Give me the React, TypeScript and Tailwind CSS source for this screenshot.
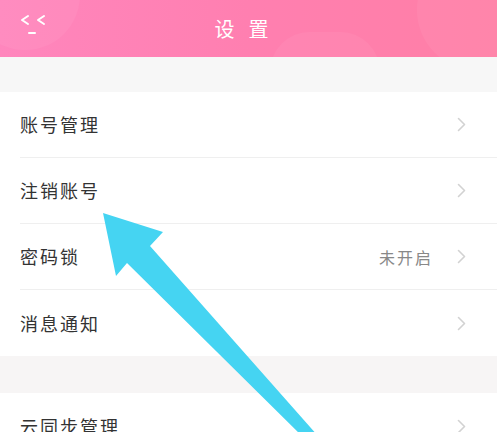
const font = { fontFamily: '"Noto Sans CJK SC", "Noto Sans", sans-serif' }

const Chevron = () => (
  <svg width="9" height="15" viewBox="0 0 9 15" fill="none" stroke="#d2d2d2" strokeWidth="1.6" strokeLinecap="round" strokeLinejoin="round">
    <path d="M1.5 1.5 L7.5 7.5 L1.5 13.5" />
  </svg>
)

const Row = ({ label, value, last }: { label: string; value?: string; last?: boolean }) => (
  <div className="flex h-[66px] items-center bg-white pl-5">
    <div className={`flex h-full flex-1 items-center pr-[31px] ${last ? '' : 'border-b border-[#efefef]'}`}>
      <span className="flex-1 text-[18px] tracking-[2px] text-[#333]">{label}</span>
      {value && <span className="mr-[24px] text-[16px] tracking-[2px] text-[#888]">{value}</span>}
      <Chevron />
    </div>
  </div>
)

const App = () => {
  return (
    <div className="relative h-[432px] w-[497px] overflow-hidden bg-[#f7f6f6]" style={font}>
      <div className="relative flex h-[57px] items-center justify-center overflow-hidden bg-gradient-to-r from-[#ff86bd] via-[#ff7fb0] to-[#ff7fa6]">
        <div className="absolute -left-[30px] -top-[60px] h-[110px] w-[110px] rounded-full bg-white/5" />
        <div className="absolute left-[270px] top-[32px] h-[80px] w-[110px] rounded-full bg-white/5" />
        <div className="absolute right-[-40px] -top-[50px] h-[120px] w-[120px] rounded-full bg-white/5" />
        <svg className="absolute left-[19px] top-[13px]" width="30" height="24" viewBox="0 0 30 24" fill="none" stroke="white" strokeWidth="2" strokeLinecap="round" strokeLinejoin="round">
          <path d="M9 3 L3 7 L9 11" />
          <path d="M25 3 L19 7 L25 11" />
          <path d="M10 20 L16 20" />
        </svg>
        <h1 className="relative text-[20px] tracking-[14px] text-white">设置</h1>
      </div>
      <div className="h-[35px] bg-[#f7f7f7]" />
      <Row label="账号管理" />
      <Row label="注销账号" />
      <Row label="密码锁" value="未开启" />
      <Row label="消息通知" last />
      <div className="h-[37px] bg-[#f7f5f5]" />
      <Row label="云同步管理" last />
      <svg className="pointer-events-none absolute left-0 top-0" width="497" height="432" viewBox="0 0 497 432">
        <polygon points="103,213 163,232 150,246 318,436 306,440 127,263 116,276" fill="#45d4f2" />
      </svg>
    </div>
  )
}

export default App
